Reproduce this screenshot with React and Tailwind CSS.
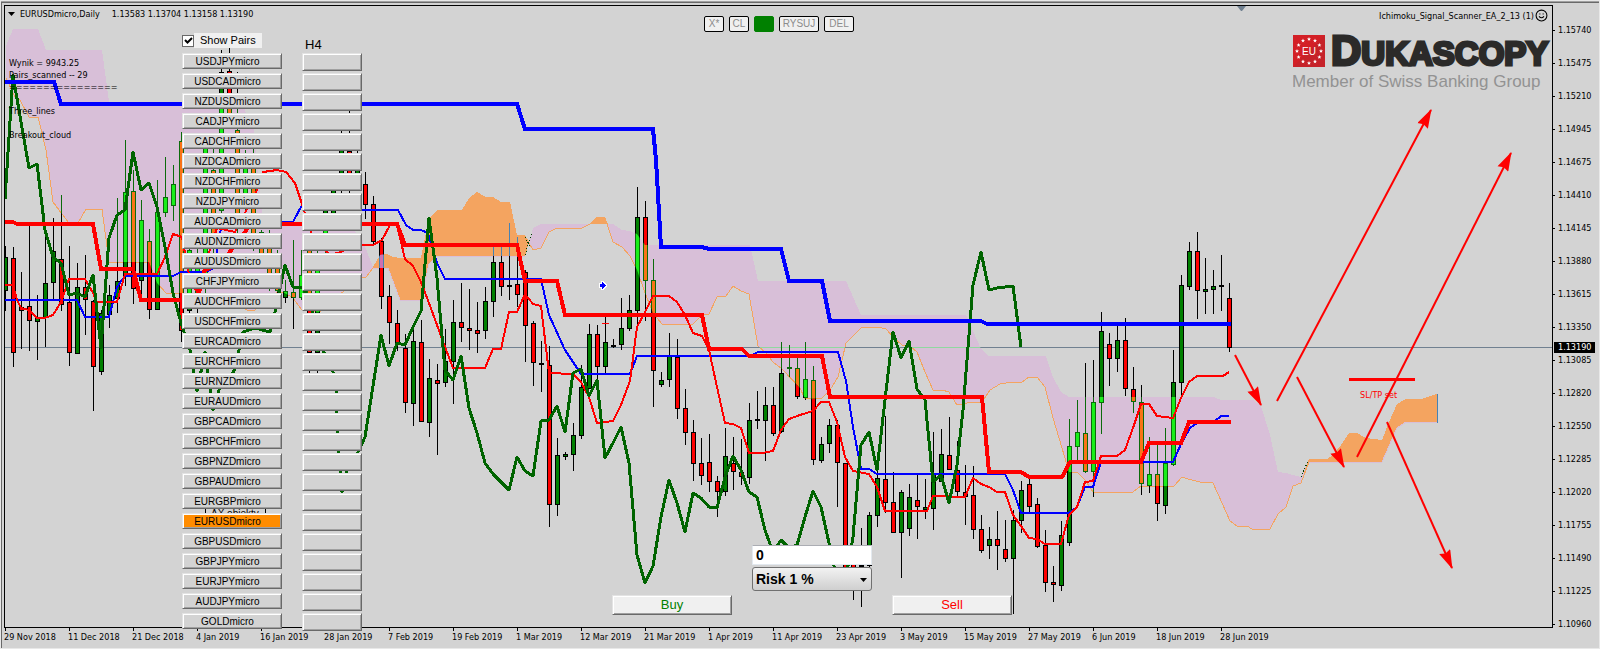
import React from "react";
import { Smile } from "lucide-react";

const PAIRS = [
  "USDJPYmicro", "USDCADmicro", "NZDUSDmicro", "CADJPYmicro", "CADCHFmicro",
  "NZDCADmicro", "NZDCHFmicro", "NZDJPYmicro", "AUDCADmicro", "AUDNZDmicro",
  "AUDUSDmicro", "CHFJPYmicro", "AUDCHFmicro", "USDCHFmicro", "EURCADmicro",
  "EURCHFmicro", "EURNZDmicro", "EURAUDmicro", "GBPCADmicro", "GBPCHFmicro",
  "GBPNZDmicro", "GBPAUDmicro", "EURGBPmicro", "EURUSDmicro", "GBPUSDmicro",
  "GBPJPYmicro", "EURJPYmicro", "AUDJPYmicro", "GOLDmicro",
];

const PRICES = [
  "1.15740", "1.15475", "1.15210", "1.14945", "1.14675", "1.14410", "1.14145",
  "1.13880", "1.13615", "1.13350", "1.13085", "1.12820", "1.12550", "1.12285",
  "1.12020", "1.11755", "1.11490", "1.11225", "1.10960",
];

const DATES = [
  "29 Nov 2018", "11 Dec 2018", "21 Dec 2018", "4 Jan 2019", "16 Jan 2019",
  "28 Jan 2019", "7 Feb 2019", "19 Feb 2019", "1 Mar 2019", "12 Mar 2019",
  "21 Mar 2019", "1 Apr 2019", "11 Apr 2019", "23 Apr 2019", "3 May 2019",
  "15 May 2019", "27 May 2019", "6 Jun 2019", "18 Jun 2019", "28 Jun 2019",
];

// one candle every 8 units from x = 5: [high, body top, body bottom, low, up?]
const CANDLES = [
  [246, 257, 290, 310, 1], [247, 258, 352, 366, 0], [272, 307, 310, 348, 0],
  [225, 306, 320, 350, 0], [295, 318, 321, 359, 1], [232, 283, 317, 346, 1],
  [218, 251, 282, 298, 1], [195, 259, 304, 310, 0], [246, 302, 352, 365, 0],
  [263, 287, 353, 353, 1], [255, 287, 299, 334, 0], [300, 301, 366, 410, 0],
  [310, 313, 371, 374, 1], [285, 295, 314, 327, 1], [198, 281, 298, 312, 1],
  [140, 192, 275, 285, 1], [170, 191, 288, 303, 0], [200, 220, 280, 298, 1],
  [229, 241, 309, 318, 0], [180, 212, 309, 309, 1], [157, 197, 212, 216, 1],
  [165, 184, 205, 220, 1], [132, 141, 330, 341, 0], [240, 250, 310, 320, 1],
  [245, 262, 306, 312, 1], [140, 147, 278, 300, 1], [140, 170, 245, 260, 0],
  [50, 72, 210, 230, 1], [48, 71, 113, 125, 0], [72, 130, 225, 240, 0],
  [150, 168, 200, 240, 1], [140, 167, 235, 250, 0], [230, 232, 255, 265, 0],
  [230, 245, 275, 290, 0], [250, 260, 290, 300, 0], [280, 291, 297, 302, 1],
  [240, 292, 297, 328, 0], [250, 275, 297, 299, 1], [240, 250, 352, 373, 0],
  [250, 260, 352, 372, 1], [200, 210, 235, 260, 1], [180, 190, 214, 220, 1],
  [130, 150, 190, 200, 1], [111, 151, 190, 193, 0], [150, 160, 175, 190, 1],
  [172, 184, 204, 218, 0], [196, 204, 241, 245, 0], [238, 241, 296, 308, 0],
  [285, 296, 322, 343, 0], [310, 323, 343, 350, 0], [334, 348, 402, 412, 0],
  [330, 341, 403, 425, 1], [320, 342, 421, 421, 0], [359, 378, 422, 436, 1],
  [364, 380, 383, 454, 0], [329, 361, 382, 386, 1], [300, 322, 361, 403, 1],
  [283, 322, 327, 341, 0], [289, 328, 330, 349, 0], [302, 330, 333, 352, 0],
  [287, 301, 330, 338, 1], [247, 262, 301, 316, 1], [247, 262, 286, 295, 0],
  [223, 285, 286, 299, 0], [237, 284, 294, 306, 0], [270, 272, 325, 361, 0],
  [321, 323, 362, 385, 0], [341, 363, 364, 391, 0], [346, 365, 504, 526, 0],
  [438, 455, 504, 515, 1], [452, 454, 456, 459, 1], [423, 435, 454, 470, 1],
  [365, 387, 435, 438, 1], [324, 334, 388, 388, 1], [325, 334, 366, 380, 0],
  [317, 342, 366, 372, 1], [339, 345, 346, 347, 0], [298, 328, 344, 349, 1],
  [295, 310, 328, 330, 1], [187, 217, 310, 328, 1], [201, 217, 280, 320, 0],
  [259, 280, 370, 406, 0], [372, 380, 384, 386, 1], [333, 356, 379, 386, 1],
  [339, 357, 408, 418, 0], [389, 408, 432, 444, 0], [420, 432, 463, 480, 0],
  [438, 463, 475, 484, 0], [434, 462, 481, 491, 0], [476, 481, 491, 516, 0],
  [428, 456, 491, 495, 1], [437, 463, 471, 489, 0], [439, 472, 476, 484, 0],
  [403, 420, 477, 483, 1], [391, 419, 420, 428, 0], [387, 405, 420, 460, 1],
  [387, 405, 433, 435, 0], [342, 373, 431, 432, 1], [345, 367, 368, 376, 0],
  [357, 368, 396, 398, 0], [342, 379, 397, 399, 1], [366, 380, 459, 464, 0],
  [437, 444, 460, 462, 1], [419, 425, 443, 452, 1], [420, 425, 462, 506, 0],
  [463, 463, 567, 567, 0], [550, 555, 568, 599, 0], [528, 565, 566, 606, 0],
  [512, 515, 565, 566, 1], [470, 478, 515, 526, 1], [416, 479, 502, 512, 0],
  [472, 502, 532, 532, 0], [490, 492, 532, 577, 1], [484, 497, 528, 535, 1],
  [475, 500, 506, 538, 0], [479, 507, 509, 518, 1], [432, 474, 508, 529, 1],
  [429, 454, 481, 481, 1], [417, 455, 469, 469, 0], [441, 470, 491, 495, 0],
  [465, 492, 496, 524, 0], [466, 495, 529, 538, 0], [515, 529, 550, 552, 0],
  [527, 539, 545, 558, 1], [511, 539, 545, 569, 0], [520, 549, 558, 561, 0],
  [510, 520, 558, 613, 1], [481, 490, 520, 532, 1], [478, 484, 506, 512, 0],
  [498, 504, 546, 547, 0], [530, 545, 582, 591, 0], [566, 582, 584, 601, 0],
  [521, 535, 585, 590, 1], [419, 446, 542, 545, 1], [400, 432, 446, 460, 1],
  [363, 433, 471, 472, 0], [360, 402, 471, 496, 1], [312, 331, 402, 433, 1],
  [333, 344, 358, 385, 0], [326, 340, 358, 371, 1], [318, 340, 388, 395, 0],
  [367, 389, 401, 412, 0], [385, 402, 483, 494, 0], [437, 474, 485, 492, 1],
  [445, 474, 503, 520, 0], [428, 463, 505, 513, 1], [350, 382, 464, 465, 1],
  [275, 285, 382, 394, 1], [242, 251, 286, 289, 1], [232, 251, 290, 318, 0],
  [258, 289, 291, 313, 1], [270, 286, 289, 313, 1], [255, 285, 286, 310, 0],
  [283, 298, 347, 351, 0],
];

const SPAN_LEFT =
  "6,78 15,97 20,100 29,117 38,117 46,150 53,202 62,214 69,223 78,223 86,209 102,209 109,262 149,262 157,283 166,293 222,293 247,310 255,310 277,292 283,292 293,298 302,310 320,312 345,290 362,277 366,277 373,268";
const TOP_LEFT =
  "373,267 362,239 345,222 270,222 262,213 254,129 250,129 245,110 237,102 109,102 102,50 46,50 38,29 13,29 6,46";
const SPAN_MID =
  "529,243 533,250 541,248 549,232 557,228 582,228 590,224 597,217 605,218 609,230 613,242 622,247 630,256 637,270 645,293 653,313 662,324 693,324 702,315 709,314 717,297 726,296 733,286 741,291 749,294 758,346 766,353 773,362 782,369 800,388 805,399 822,398 830,390 838,377 846,343 862,327 878,327 886,329 893,337 902,345 910,346 917,352 925,372 933,390 942,390 949,392 957,405 967,403 982,402 990,390 1000,384 1013,382 1022,382 1029,377 1037,377 1045,387 1053,418 1062,448 1069,472 1077,472 1085,480 1093,492 1133,492 1141,486 1174,486 1182,477 1188,479 1200,482 1213,483 1222,503 1230,521 1237,526 1247,526 1252,529 1270,529 1278,514 1286,507 1293,486 1301,483 1309,462";
const TOP_MID =
  "1309,459 1301,477 1293,475 1286,473 1278,472 1270,435 1261,406 1253,400 1221,400 1214,397 1069,397 1061,392 1053,377 1046,356 989,356 981,349 966,315 861,315 846,281 758,281 750,245 645,245 637,234 630,231 622,230 613,224 541,224 533,228 529,243";

const THISTLE_LEFT = `${SPAN_LEFT} ${TOP_LEFT}`;
const THISTLE_MID = `${SPAN_MID} ${TOP_MID}`;

const SANDY_A =
  "373,267 380,255 387,254 393,257 400,258 421,258 424,243 429,218 437,210 462,210 469,198 477,192 486,197 493,197 501,202 510,202 517,235 525,235 529,242 525,256 437,256 429,264 421,300 400,300 388,268 373,268";
const SANDY_B = "590,224 597,217 605,218 608,224";
const SANDY_C =
  "1303,475 1309,459 1327,459 1333,455 1341,445 1349,433 1357,433 1366,438 1382,440 1389,422 1397,404 1406,399 1422,399 1430,396 1437,394 1437,422 1406,422 1397,428 1382,462 1309,462";

const CHIKOU =
  "5,199 13,75 21,122 29,168 37,164 45,230 53,257 61,263 69,295 77,293 85,297 93,275 101,348 109,238 117,215 125,210 133,152 141,190 149,183 157,207 165,247 173,293 181,323 190,350 197,391 205,352 213,410 219,390 234,371 239,350 243,332 255,328 270,332 275,312 285,265 293,287 302,287 310,300 317,330 323,350 333,372 336,391 338,440 342,492 347,471 358,452 365,437 381,335 389,366 397,343 405,345 413,327 421,311 429,218 437,278 445,370 453,380 461,356 469,408 477,433 485,463 493,474 501,482 509,490 517,457 525,471 533,476 541,421 549,420 557,406 565,432 573,373 581,369 589,396 597,380 605,458 613,443 621,427 629,463 637,555 645,583 653,566 661,517 669,480 677,503 685,532 693,493 701,498 709,507 717,508 725,477 733,456 741,470 749,492 757,497 765,530 773,552 781,540 789,548 797,545 805,517 813,491 821,507 829,543 837,580 848,566 853,537 861,445 869,432 877,470 885,400 893,332 901,358 909,341 917,389 925,400 933,482 941,475 949,503 957,465 963,410 973,285 981,252 989,290 997,288 1013,286 1021,347";
const BLUE_THICK =
  "5,82 54,82 61,104 517,104 525,129 653,129 656,160 661,247 702,247 709,249 781,249 789,281 822,281 830,321 981,321 987,324 1231,324";
const RED_THICK =
  "5,222 13,222 17,224 93,224 101,269 133,269 141,300 197,300 205,270 222,262 245,232 250,224 397,224 405,245 517,245 525,281 557,281 565,315 702,315 709,349 742,349 749,356 822,356 830,397 982,397 989,472 1021,472 1029,477 1062,477 1070,462 1141,462 1149,443 1181,443 1189,422 1231,422";
const BLUE_THIN =
  "5,300 77,300 85,317 109,317 117,287 125,276 173,276 181,272 205,272 214,268 221,228 230,222 293,222 302,205 310,200 350,210 398,210 406,225 413,230 421,230 428,233 437,263 445,279 541,279 549,315 565,350 581,374 630,374 637,356 750,356 758,352 838,352 846,381 853,427 861,469 869,469 877,474 1005,474 1013,490 1021,513 1069,513 1077,507 1085,487 1093,487 1101,462 1173,462 1181,444 1190,428 1197,423 1215,421 1221,416 1229,416";
const RED_THIN =
  "5,285 13,285 17,300 21,308 29,310 37,318 45,318 53,315 61,302 69,279 85,279 93,293 97,302 117,302 125,274 157,274 165,257 173,234 182,237 190,280 197,292 204,268 217,228 235,232 257,190 263,172 277,170 286,172 295,183 302,204 312,235 330,255 341,252 350,246 362,245 373,245 382,240 390,225 397,225 405,259 413,266 421,282 429,303 437,325 445,347 453,368 485,368 493,349 501,349 509,312 517,312 525,294 533,304 541,306 549,373 573,374 581,382 589,397 597,423 605,422 613,421 621,405 630,381 637,327 645,312 653,296 669,296 677,302 685,315 693,333 702,336 709,350 717,387 725,423 733,424 741,428 749,453 762,453 773,451 781,430 789,419 800,415 813,411 821,402 829,402 837,422 845,457 853,471 869,474 877,487 885,511 927,511 933,496 965,497 973,478 981,484 989,487 997,492 1005,492 1013,515 1021,526 1029,538 1037,539 1045,544 1061,544 1069,515 1077,507 1085,482 1093,481 1101,456 1117,456 1125,450 1133,428 1141,404 1149,404 1157,416 1173,418 1181,398 1189,382 1197,376 1223,376 1229,372";

const ARROWS = [
  [1235, 355, 1261, 405],
  [1277, 401, 1431, 110],
  [1297, 377, 1344, 467],
  [1357, 457, 1511, 153],
  [1387, 422, 1452, 568],
];

const smallFont = "font-['DejaVu_Sans_Condensed','DejaVu_Sans',sans-serif] text-[9px]";
const bevel =
  "block border border-t-[#e3e3e3] border-l-[#e3e3e3] border-r-[#696969] border-b-[#696969] shadow-[inset_1px_1px_0_#fff,inset_-1px_-1px_0_#a0a0a0]";

function Candles({ up, down, line }) {
  return CANDLES.map(([high, top, bottom, low, rising], i) => {
    const x = 5 + i * 8;
    const fill = rising ? up : down;
    return (
      <g key={x}>
        <rect x={x} y={high} width="1" height={low - high + 1} fill={line} />
        <rect x={x - 2} y={top} width="5" height={bottom - top + 1} fill={line} />
        {bottom - top > 1 && (
          <rect x={x - 1} y={top + 1} width="3" height={bottom - top - 1} fill={fill} />
        )}
      </g>
    );
  });
}

function Chart() {
  return (
    <svg viewBox="5 6 1547 621" className="block w-full" role="img" aria-label="EURUSDmicro Daily chart">
      <defs>
        <clipPath id="thistle">
          <polygon points={THISTLE_LEFT} />
          <polygon points={THISTLE_MID} />
        </clipPath>
        <clipPath id="sandy">
          <polygon points={SANDY_A} />
        </clipPath>
        <marker id="head" markerUnits="userSpaceOnUse" markerWidth="22" markerHeight="12" refX="19" refY="6" orient="auto">
          <path d="M20 6 L1 0 L3 6 L1 12 Z" fill="red" />
        </marker>
      </defs>

      <g shapeRendering="crispEdges" fill="none">
        <polygon points={THISTLE_LEFT} fill="#d8bfd8" />
        <polygon points={THISTLE_MID} fill="#d8bfd8" />
        <polygon points={SANDY_A} fill="#f4a460" />
        <polygon points={SANDY_B} fill="#f4a460" />
        <polygon points={SANDY_C} fill="#f4a460" />
        <polyline points={SPAN_LEFT} stroke="#f4a460" />
        <polyline points={SPAN_MID} stroke="#f4a460" />
        <polyline points="373,268 388,268 400,300 421,300 429,264 437,256 525,256" stroke="#d8bfd8" />
        <polyline points="1309,462 1382,462 1397,428 1406,422 1437,422" stroke="#d8bfd8" />
        <rect x="1437" y="394" width="1" height="29" fill="#4682b4" />
        <path d="M525 255 L532 232 M525 237 L531 248 M1301 477 L1308 461" stroke="#004000" strokeDasharray="1 2" />

        <rect x="5" y="347" width="1547" height="1" fill="#708090" />
        <g>
          <Candles up="#008000" down="#ff0000" line="#000" />
        </g>
        <g clipPath="url(#thistle)">
          <rect x="5" y="347" width="1200" height="1" fill="#90d8a0" />
          <Candles up="#1aee1a" down="#f97316" line="#0b6b0b" />
        </g>
        <g clipPath="url(#sandy)">
          <Candles up="#2f8fd0" down="#d070b0" line="#4682b4" />
        </g>

        <polyline points={BLUE_THIN} stroke="#0000ff" strokeWidth="2" />
        <polyline points={RED_THIN} stroke="#ff0000" strokeWidth="2" />
        <polyline points={CHIKOU} stroke="#006400" strokeWidth="3" strokeLinejoin="round" />
        <polyline points={BLUE_THICK} stroke="#0000ff" strokeWidth="4" />
        <polyline points={RED_THICK} stroke="#ff0000" strokeWidth="4" />

        <rect x="602" y="323" width="7" height="1" fill="#ff0000" />
        <path
          d="M600 284 h2 v-2 h1 v1 h1 v1 h1 v1 h1 v1 h-1 v1 h-1 v1 h-1 v1 h-1 v-2 h-2 z"
          fill="#00f"
          stroke="#fff"
          strokeWidth="2"
          paintOrder="stroke"
        />
        <rect x="1349" y="378" width="66" height="3" fill="#ff0000" />
        <rect x="205" y="505" width="60" height="14" fill="#d3d3d3" stroke="#000" />
      </g>
      <path d="M1237 6 h9 l-4 5 h-1 z" fill="#708090" />

      <text x="211" y="517" className="font-['Liberation_Sans',sans-serif] text-[10px]">
        AX objekty
      </text>
      <text x="1360" y="398" fill="#ff0000" className="font-['DejaVu_Sans_Condensed','DejaVu_Sans',sans-serif] text-[9px]">
        SL/TP set
      </text>

      {ARROWS.map(([x1, y1, x2, y2]) => (
        <line key={x1} x1={x1} y1={y1} x2={x2} y2={y2} stroke="red" strokeWidth="2" markerEnd="url(#head)" />
      ))}
    </svg>
  );
}

function Logo() {
  const stars = Array.from({ length: 12 }, (_, i) => (i * Math.PI) / 6);
  return (
    <svg viewBox="0 -12 260 72" className="block h-[72px] w-[260px]">
      <rect width="32" height="32" y="2" fill="#d31f26" />
      <path d="M32 2 V34 H0 Z" fill="#b9262c" opacity=".5" />
      {stars.map((a) => (
        <path
          key={a}
          transform={`translate(${16 + 12 * Math.sin(a)} ${18 - 12 * Math.cos(a)})`}
          d="M0 -2 L.6 -.6 L2 -.5 L.9 .4 L1.2 1.8 L0 1 L-1.2 1.8 L-.9 .4 L-2 -.5 L-.6 -.6 Z"
          fill="#fff"
        />
      ))}
      <text x="16" y="22" textAnchor="middle" fill="#fff" className="font-['Liberation_Sans',sans-serif] text-[10px]">
        EU
      </text>
      <g fill="#2b2a29" stroke="#2b2a29" strokeWidth="3" className="font-['Liberation_Sans',sans-serif] font-bold">
        <text x="38" y="32">
          <tspan className="text-[42px]">D</tspan>
          <tspan className="text-[33px]">UKASCOPY</tspan>
        </text>
      </g>
      <text x="-1" y="54" fill="#929292" className="font-['Liberation_Sans',sans-serif] text-[17px]">
        Member of Swiss Banking Group
      </text>
    </svg>
  );
}

function ToolButton({ children, className, label }) {
  return (
    <button aria-label={label} className={`h-4 rounded-[2px] border text-center text-[10px] leading-[14px] text-[#8c8c8c] ${className}`}>
      {children}
    </button>
  );
}

function PairPanel() {
  return (
    <div className="absolute top-[27px] left-[177px] flex gap-5">
      <div className="w-[100px]">
        <label className="mb-[5px] flex h-[15px] w-20 items-center text-[11px]">
          <input type="checkbox" defaultChecked className="peer sr-only" />
          <span className="flex h-3 w-3 items-center justify-center border border-[#696969] bg-white">
            <svg viewBox="0 0 9 9" className="h-[9px] w-[9px]">
              <path d="M1 4 L3.5 6.5 L8 2" fill="none" stroke="#000" strokeWidth="2" />
            </svg>
          </span>
          <span className="h-[15px] flex-1 bg-[#f0f0f0] pl-[6px] leading-[15px]">Show Pairs</span>
        </label>
        <div className="flex flex-col gap-1">
          {PAIRS.map((pair) => (
            <button
              key={pair}
              className={`h-4 w-full pr-[9px] text-center text-[10px] leading-[15px] ${bevel} ${
                pair === "EURUSDmicro" ? "bg-[#ff8c00]" : "bg-[#d3d3d3]"
              }`}
            >
              {pair}
            </button>
          ))}
        </div>
      </div>

      <div className="w-[60px]">
        <div className="flex h-5 items-end pl-[3px] text-[13px] leading-4">H4</div>
        <div className="flex flex-col gap-[2px]">
          {PAIRS.map((pair) => (
            <button key={pair} aria-label={`${pair} H4`} className={`h-[18px] w-full bg-[#d3d3d3] ${bevel}`} />
          ))}
        </div>
      </div>
    </div>
  );
}

function TradePanel() {
  return (
    <div className="absolute top-[539px] left-[607px] flex gap-5">
      <button className={`mt-[50px] h-5 w-[120px] bg-[#f0f0f0] text-[13px] leading-[18px] text-[#008000] ${bevel}`}>
        Buy
      </button>
      <div className="flex w-[120px] flex-col gap-[2px] text-[14px] font-bold">
        <input aria-label="Lots" defaultValue="0" className="h-5 w-full border border-[#e3e9ef] border-t-[#abadb3] bg-white px-[3px]" />
        <div className="relative">
          <select
            aria-label="Risk"
            className="h-6 w-full appearance-none rounded-[3px] border border-[#707070] bg-linear-to-b from-[#f2f2f2] to-[#cfcfcf] pl-[3px]"
          >
            <option>Risk 1 %</option>
          </select>
          <svg viewBox="0 0 7 4" className="pointer-events-none absolute top-[11px] right-[5px] h-1 w-[7px]">
            <path d="M0 0 H7 L3.5 4 Z" />
          </svg>
        </div>
      </div>
      <button className={`mt-[50px] h-5 w-[120px] bg-[#f0f0f0] text-[13px] leading-[18px] text-[#ff0000] ${bevel}`}>
        Sell
      </button>
    </div>
  );
}

function App() {
  return (
    <div className="min-h-screen overflow-hidden border border-[#e8e8e8] bg-[#d3d3d3] font-['Liberation_Sans',Arial,sans-serif] text-black">
      <div className="border-t border-[#a0a0a0]">
        <div className="grid grid-cols-[minmax(0,1fr)_46px] border-t border-l border-[#696969] pt-[2px] pl-[2px]">
          <main className="relative border border-black">
            <Chart />

            <div className={`absolute top-[2px] left-[3px] flex items-center leading-3 ${smallFont}`}>
              <svg viewBox="0 0 7 4" className="mr-[5px] h-1 w-[7px]">
                <path d="M0 0 H7 L3.5 4 Z" />
              </svg>
              <span className="mr-3">EURUSDmicro,Daily</span>
              <span>1.13583 1.13704 1.13158 1.13190</span>
            </div>

            <div className={`absolute top-[51px] left-[4px] leading-3 ${smallFont}`}>
              <p>Wynik = 9943.25</p>
              <p>Pairs_scanned -- 29</p>
              <p>================</p>
              <p className="mt-3">Three_lines</p>
              <p className="mt-3">Breakout_cloud</p>
            </div>

            <div className="absolute top-[10px] left-[699px] flex gap-[5px]">
              <ToolButton className="w-5 border-black bg-[#f0f0f0]">X*</ToolButton>
              <ToolButton className="w-5 border-black bg-[#f0f0f0]">CL</ToolButton>
              <ToolButton className="w-5 border-[#008000] bg-[#008000]" label="Status" />
              <ToolButton className="w-10 border-black bg-[#f0f0f0]">RYSUJ</ToolButton>
              <ToolButton className="w-[30px] border-black bg-[#f0f0f0]">DEL</ToolButton>
            </div>

            <div className={`absolute top-[3px] right-[4px] flex items-center gap-px leading-3 ${smallFont}`}>
              <span>Ichimoku_Signal_Scanner_EA_2_13 (1)</span>
              <Smile size={13} strokeWidth={2} />
            </div>
            <div className="absolute top-[15px] right-[-1px]">
              <Logo />
            </div>

            <PairPanel />
            <TradePanel />
          </main>

          <aside className={`relative row-span-2 pt-[9px] ${smallFont}`}>
            {PRICES.map((price) => (
              <div key={price} className="flex h-[33px] items-center gap-[3px]">
                <span className="h-px w-[2px] bg-black" />
                {price}
              </div>
            ))}
            <div className="absolute top-[337px] left-[1px] h-[11px] w-[41px] bg-black pl-[4px] leading-[11px] text-white">
              1.13190
            </div>
          </aside>

          <footer className={`flex h-5 overflow-hidden whitespace-nowrap ${smallFont}`}>
            {DATES.map((date) => (
              <div key={date} className="w-16 shrink-0">
                <div className="ml-px h-[3px] w-px bg-black" />
                <div className="leading-3">{date}</div>
              </div>
            ))}
          </footer>
        </div>
      </div>
    </div>
  );
}

export default App;
